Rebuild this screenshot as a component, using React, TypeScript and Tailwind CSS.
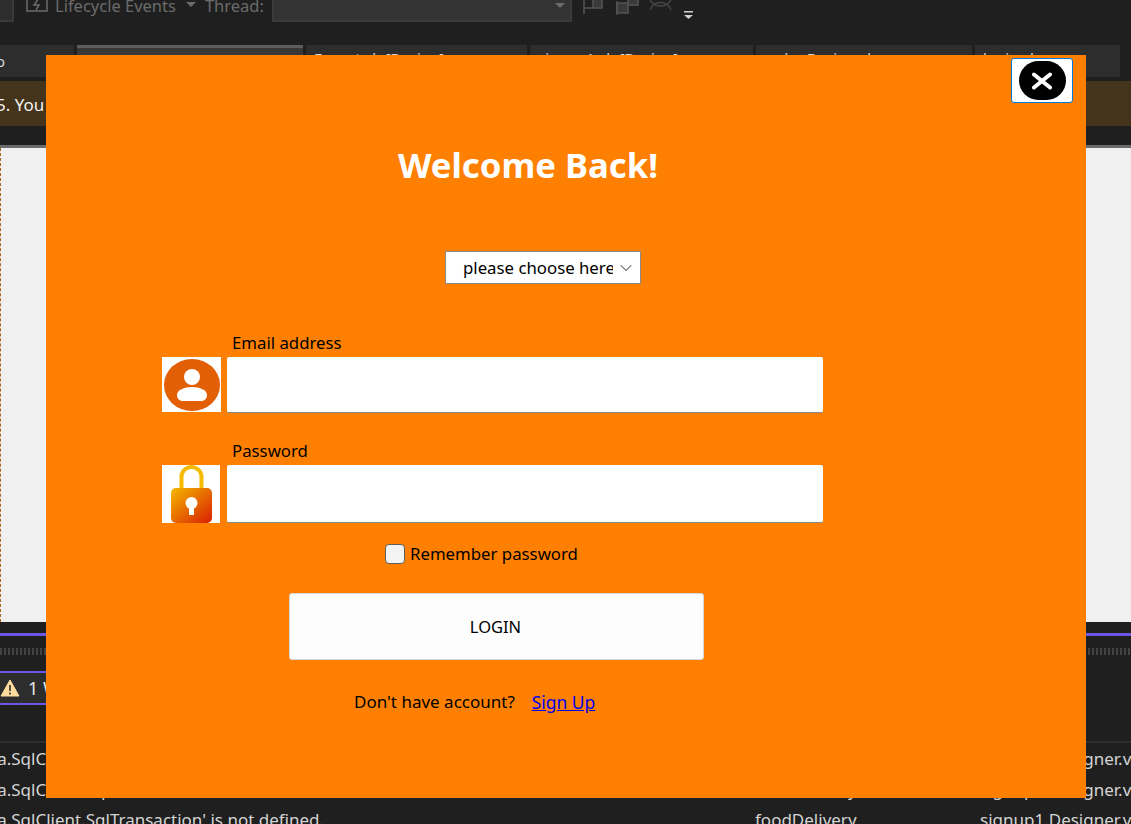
// Login dialog sitting on top of the Visual Studio window
import { ChevronDown } from 'lucide-react';

const tabs = [
    { label: 'loginpage.vb [Design]', width: 'w-[226px]', active: true },
    { label: 'Forgot.vb [Design]', width: 'w-[221px]', active: false },
    { label: 'signup1.vb [Design]', width: 'w-[223px]', active: false },
    { label: 'order Design.vb', width: 'w-[216px]', active: false },
    { label: 'login.vb', width: 'w-[145px]', active: false },
];

const rows = [
    { left: 'ta.SqlClient.SqlConnection', mid: '', right: 'signup1.Designer.vb' },
    { left: 'ta.SqlClient.SqlCommand', mid: 'foodDelivery', right: 'signup1.Designer.vb' },
    { left: "ta.SqlClient.SqlTransaction' is not defined.", mid: 'foodDelivery', right: 'signup1.Designer.vb' },
];

function UserIcon() {
    return (
        <svg viewBox="0 0 59 55" className="h-[55px] w-[59px] bg-white">
            <ellipse cx="30" cy="28" rx="28" ry="26" fill="#e25f05" />
            <circle cx="30" cy="20" r="8" fill="#ffffff" />
            <path d="M15 38c0-5 7-8 15-8s15 3 15 8c0 4-3 6-6 6H21c-3 0-6-2-6-6z" fill="#ffffff" />
        </svg>
    );
}

function LockIcon() {
    return (
        <svg viewBox="0 0 58 58" className="h-[58px] w-[58px] bg-white">
            <defs>
                <linearGradient id="lockFill" x1="0" y1="0" x2="1" y2="1">
                    <stop offset="0" stopColor="#f5b800" />
                    <stop offset="1" stopColor="#d81e00" />
                </linearGradient>
            </defs>
            <path d="M19.5 26V12a10 10 0 0 1 20 0v14" fill="none" stroke="#f5bb00" strokeWidth="4" />
            <rect x="9" y="23" width="41" height="35" rx="5" fill="url(#lockFill)" />
            <circle cx="29.5" cy="38" r="6" fill="#ffffff" />
            <rect x="27" y="39" width="5" height="11" fill="#ffffff" />
        </svg>
    );
}

export default function App() {
    return (
        <div className="relative h-[824px] w-[1131px] overflow-hidden bg-[#1f1f1f] font-['Noto_Sans',sans-serif] text-[16.8px]">
            {/* Toolbar */}
            <div className="flex h-[22px] items-end text-[#6b6b6b]">
                <div className="h-[22px] w-[14px] border-r-2 border-b-2 border-[#3a3a3a] bg-[#2d2d2d]" />
                <svg viewBox="0 0 22 16" className="mb-[8px] ml-[12px] h-[20px] w-[22px]" fill="none" stroke="#6b6b6b" strokeWidth="1.5">
                    <rect x="1" y="1" width="20" height="14" />
                    <path d="M13 2 8 9h5l-3 5" />
                </svg>
                <span className="mb-[5px] ml-[7px] text-[16.5px] leading-[22px]">Lifecycle Events</span>
                <div className="mb-[15px] ml-[10px] h-0 w-0 border-x-[5px] border-t-[5px] border-x-transparent border-t-[#6b6b6b]" />
                <span className="mb-[5px] ml-[9px] text-[16.5px] leading-[22px]">Thread:</span>
                <div className="ml-[8px] flex h-[22px] w-[300px] items-start justify-end border-r-2 border-b-2 border-l-2 border-[#3a3a3a] bg-[#333333] pt-[3px] pr-[5px]">
                    <div className="h-0 w-0 border-x-[5px] border-t-[5px] border-x-transparent border-t-[#6b6b6b]" />
                </div>
                <svg viewBox="0 0 112 24" className="ml-[10px] h-[24px] w-[112px] self-start" fill="none" stroke="#555555" strokeWidth="1.5">
                    <path d="M2 0v14" />
                    <path d="M2 8h9" />
                    <rect x="11" y="-1" width="9" height="9" fill="#3a3a3a" />
                    <path d="M35 1v14" />
                    <rect x="35" y="3" width="11" height="10" fill="#3a3a3a" />
                    <rect x="46" y="-1" width="10" height="6" fill="#3a3a3a" />
                    <path d="M68 0c5 8 16 8 21 0M68 10c4-10 17-10 21 0" stroke="#444444" />
                    <rect x="102" y="11" width="9" height="1.5" fill="#d0d0d0" stroke="none" />
                    <path d="M102 15h9l-4.5 4z" fill="#d0d0d0" stroke="none" />
                </svg>
            </div>

            {/* Document tabs */}
            <div className="mt-[23px] flex h-[32px] gap-[3px] text-[15px] text-[#d6d6d6]">
                <div className="flex w-[74px] items-center overflow-hidden bg-[#2d2d2d]">
                    <span className="ml-[-4px]">o</span>
                </div>
                {tabs.map((tab) => (
                    <div
                        key={tab.label}
                        className={`${tab.width} truncate bg-[#2d2d2d] pt-[2px] pl-[8px] ${tab.active ? 'border-t-[3px] border-[#5c5c5c] bg-[#383838]' : ''}`}
                    >
                        {tab.label}
                    </div>
                ))}
            </div>

            {/* Info bar */}
            <div className="mt-[4px] flex h-[45px] items-center overflow-hidden whitespace-nowrap bg-[#43341b] text-[#f2f2f2]">
                <span className="ml-[-4px] pt-[2px] text-[17px]">5. You</span>
            </div>

            {/* Designer surface */}
            <div className="mt-[19px] h-[477px] border-t-[3px] border-[#6b6b6b] bg-[#f0f0f0]">
                <div className="h-full w-px border-l border-dashed border-[#a8641c]" />
            </div>

            {/* Error list */}
            <div className="mt-[11px] h-[3px] bg-[#6b57e6]" />
            <div className="mt-[12px] h-[7px] bg-[repeating-linear-gradient(90deg,#444444_0px,#444444_2px,#1f1f1f_2px,#1f1f1f_4px)]" />
            <div className="mt-[16px] flex h-[34px] w-[46px] items-center gap-[8px] overflow-hidden whitespace-nowrap border-y-2 border-[#6b57e6] bg-[#2d2d2d] text-[18px] text-[#e6e6e6]">
                <svg viewBox="0 0 20 18" className="h-[20px] w-[20px] shrink-0">
                    <path d="M10 1 19 17H1z" fill="#ffdc9e" stroke="#ffdc9e" strokeLinejoin="round" />
                    <path d="M10 6v6M10 13.5v2" stroke="#1f1f1f" strokeWidth="1.5" />
                </svg>
                <span>1 W</span>
            </div>
            <div className="mt-[36px] border-t-2 border-[#2d2d2d]">
                {rows.map((row) => (
                    <div key={row.left} className="relative h-[30.5px] whitespace-nowrap pt-[3px] text-[17px] text-[#d4d4d4]">
                        <span className="ml-[-9px]">{row.left}</span>
                        <span className="absolute left-[755px]">{row.mid}</span>
                        <span className="absolute left-[980px]">{row.right}</span>
                    </div>
                ))}
            </div>

            {/* Login dialog */}
            <div className="absolute top-[55px] left-[46px] flex h-[743px] w-[1040px] flex-col bg-[#ff8000] text-black">
                <button className="absolute top-[3px] right-[13px] flex h-[45px] w-[62px] items-center justify-center rounded-[3px] border border-[#0078d7] bg-white">
                    <span className="flex h-[39px] w-[47px] items-center justify-center rounded-full bg-black">
                        <svg viewBox="0 0 22 18" className="h-[18px] w-[22px]" fill="none" stroke="#ffffff" strokeWidth="4" strokeLinecap="round">
                            <path d="M3 2.5 19 15.5M19 2.5 3 15.5" />
                        </svg>
                    </span>
                </button>

                <h1 className="mt-[84px] pr-[76px] text-center text-[34.7px] leading-[52px] font-bold text-white">Welcome Back!</h1>

                <div className="mt-[60px] ml-[399px] flex h-[33px] w-[196px] items-center border border-[#8a8a8a] bg-white pl-[17px]">
                    <span className="w-[150px] overflow-hidden whitespace-nowrap">please choose here</span>
                    <ChevronDown size={20} strokeWidth={1.25} className="ml-[3px] text-[#555555]" />
                </div>

                <div className="ml-[116px] flex flex-col">
                    <label className="mt-[45px] ml-[70px] leading-[28px]">Email address</label>
                    <div className="flex items-start gap-[6px]">
                        <UserIcon />
                        <div className="h-[56px] w-[596px] rounded-[2px] border-b border-b-[#8a8a8a] bg-white" />
                    </div>

                    <label className="mt-[24px] ml-[70px] leading-[28px]">Password</label>
                    <div className="flex items-start gap-[7px]">
                        <LockIcon />
                        <div className="h-[58px] w-[596px] rounded-[2px] border-b border-b-[#8a8a8a] bg-white" />
                    </div>

                    <div className="mt-[20px] ml-[223px] flex h-[21px] items-center gap-[5px]">
                        <div className="h-[20px] w-[20px] rounded-[4px] border border-[#5f5f5f] bg-[#f3f3f3]" />
                        <span>Remember password</span>
                    </div>

                    <button className="mt-[29px] ml-[127px] h-[67px] w-[415px] rounded-[3px] border border-[#d8d8d8] bg-[#fdfdfd] pt-[2px] pr-[2px] text-[16.5px]">LOGIN</button>

                    <div className="mt-[28px] ml-[192px] flex leading-[28px]">
                        <span className="text-[17px]">Don't have account?</span>
                        <a href="#" className="ml-[17px] text-[17.4px] text-[#0000ee] underline">Sign Up</a>
                    </div>
                </div>
            </div>
        </div>
    );
}
